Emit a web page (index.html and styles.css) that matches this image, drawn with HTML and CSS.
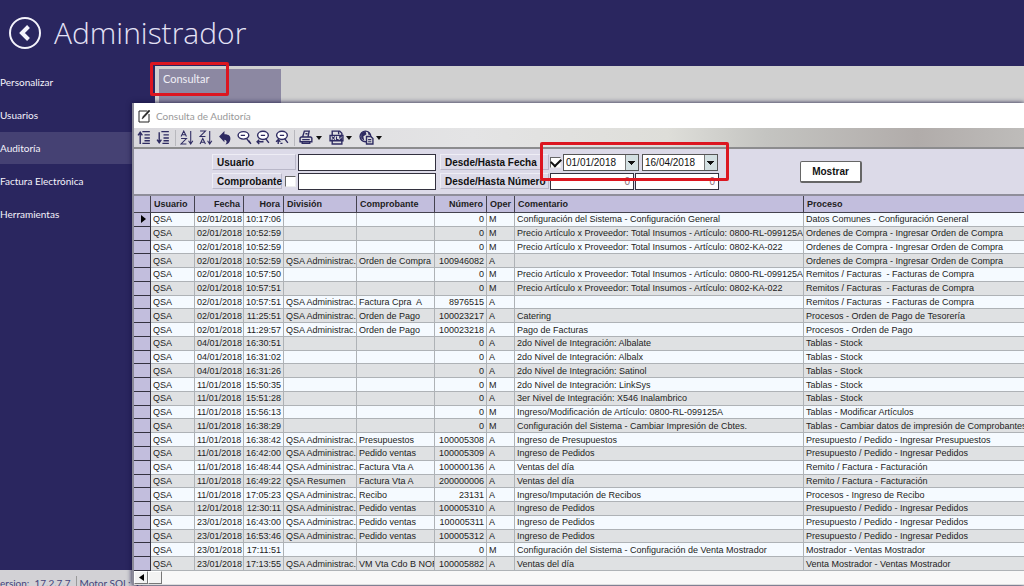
FILE: index.html
```html
<!DOCTYPE html>
<html lang="es">
<head>
<meta charset="utf-8">
<title>Administrador - Consulta de Auditoría</title>
<link rel="stylesheet" href="styles.css">
</head>
<body>
<div class="app">
  <header class="top">
    <button class="back" type="button" aria-label="Volver">
      <svg width="34" height="34" viewBox="0 0 34 34" fill="none" stroke="#f4f3fb"><circle cx="17" cy="17" r="15" stroke-width="2"/><path d="M20.500 10.500L14 17l6.500 6.500" stroke-width="4"/></svg>
    </button>
    <h1>Administrador</h1>
  </header>
  <div class="main">
    <nav class="side">
      <a href="#">Personalizar</a>
      <a href="#">Usuarios</a>
      <a href="#" class="active">Auditoría</a>
      <a href="#">Factura Electrónica</a>
      <a href="#">Herramientas</a>
    </nav>
    <div class="tiles"><button class="tile" type="button">Consultar</button></div>
  </div>
  <footer class="status"><span>ersion:&nbsp; 17.2.7.7</span><span class="motor">Motor SQL:&nbsp; C</span></footer>

  <section class="window">
    <div class="titlebar">
      <svg width="13" height="14" viewBox="0 0 13 14" fill="none" stroke="#222"><path d="M9.500 2H1v11h10V5"/><path d="M4 10l1-2.500L11 1l1 1-6 6.500z" fill="#222" stroke-width=".5"/></svg>
      <h2>Consulta de Auditoría</h2>
    </div>
    <div class="toolbar">
      <button type="button" aria-label="Expandir"><svg viewBox="0 0 14 14"><path d="M3 13V3M1 5l2-3 2 3M5 1.500h7M7 4.500h5M7 7.500h5M7 10h5M5 12.500h7"/></svg></button>
      <button type="button" aria-label="Contraer"><svg viewBox="0 0 14 14"><path d="M3 2v9M1 9l2 3 2-3M5 1.500h7M7 4.500h5M7 7.500h5M7 10h5M6 12.500h6"/></svg></button>
      <span class="sep"></span>
      <button type="button" aria-label="Orden ascendente"><svg viewBox="0 0 14 14"><path class="thin" d="M1 6l2.500-5L6 6M2 4.500h3M1 8h5l-5 5h5M10 1v11M8 10l2 3 2-3"/></svg></button>
      <button type="button" aria-label="Orden descendente"><svg viewBox="0 0 14 14"><path class="thin" d="M1 1h5L1 6h5M1 13l2.500-5L6 13M2 11.500h3M10 1v11M8 10l2 3 2-3"/></svg></button>
      <button type="button" aria-label="Deshacer"><svg viewBox="0 0 14 14"><path class="solid" d="M1 6l5-5v3c4.500 0 6 2 5.500 5-.5 2.500-2 4-4.500 4.500 1.500-2 1.500-4-1-4.500v2.500z"/></svg></button>
      <button type="button" aria-label="Buscar"><svg viewBox="0 0 14 14"><ellipse cx="6" cy="5" rx="5" ry="3.500" fill="#fff"/><path d="M3.500 5h4M9 8l3 4M11 10l2 3" /></svg></button>
      <button type="button" aria-label="Buscar siguiente"><svg viewBox="0 0 14 14"><ellipse cx="6.500" cy="5" rx="5" ry="3.800" fill="#fff"/><path d="M4.500 5h4M9 8l3 4M1 11h6M3 9l-2 2 2 2"/></svg></button>
      <button type="button" aria-label="Buscar anterior"><svg viewBox="0 0 14 14"><ellipse cx="6.500" cy="5" rx="5" ry="3.800" fill="#fff"/><path d="M4.500 5h4M9 8l3 4M3 8.500V13M1 11l2-2 2 2M5 12.500h2"/></svg></button>
      <span class="sep"></span>
      <button class="drop" type="button" aria-label="Imprimir"><svg viewBox="0 0 14 14"><path d="M3.500 6L5 1h4.500l-1 5M2 6.500h9l1 1v3.500H1V7.500zM3 11v1.500h7V11M3 9h7M6 3.500h2"/></svg></button>
      <button class="drop" type="button" aria-label="Exportar"><svg viewBox="0 0 14 14"><path d="M3 5V1h7l2 2v2M3 10v3h9v-3M1 5h12v5H1zM9 1v3"/><path class="thin" d="M2.500 6l3 3M5.500 6l-3 3M7 6v3h2M12 6h-2v1.500h2V9h-2"/></svg></button>
      <button class="drop" type="button" aria-label="Enviar"><svg viewBox="0 0 14 14"><circle cx="6" cy="6" r="5"/><path class="solid" d="M2 3l4-2 1 3-3 2 1 4-3-2zM8 1l3 3-2 1z"/><path d="M7 6h4l2 2v5H7z" fill="#ddd"/><path class="thin" d="M8.500 9h3M8.500 11h3"/></svg></button>
    </div>
    <form class="filters">
      <div class="rows">
        <div class="row">
          <label class="lab wide" for="usr">Usuario</label>
          <input class="field text" id="usr" type="text">
          <label class="lab range" for="d1">Desde/Hasta Fecha</label>
          <input class="check" type="checkbox" checked aria-label="Filtrar por fecha">
          <select class="date" id="d1"><option>01/01/2018</option></select>
          <select class="date" aria-label="Hasta fecha"><option>16/04/2018</option></select>
        </div>
        <div class="row">
          <label class="lab comp" for="cmp">Comprobante</label>
          <input class="check box" type="checkbox" aria-label="Filtrar por comprobante">
          <input class="field text" id="cmp" type="text">
          <label class="lab range" for="n1">Desde/Hasta Número</label>
          <input class="field num" id="n1" type="text" value="0">
          <input class="field num" type="text" value="0" aria-label="Hasta número">
        </div>
      </div>
      <button class="show" type="button">Mostrar</button>
    </form>
    <table class="grid">
      <colgroup><col class="c0"><col class="c1"><col class="c2"><col class="c3"><col class="c4"><col class="c5"><col class="c6"><col class="c7"><col class="c8"><col></colgroup>
      <thead><tr><th></th><th>Usuario</th><th>Fecha</th><th>Hora</th><th>División</th><th>Comprobante</th><th>Número</th><th>Oper</th><th>Comentario</th><th>Proceso</th></tr></thead>
      <tbody>
<tr><td><span class="cur"></span></td><td>QSA</td><td>02/01/2018</td><td>10:17:06</td><td></td><td></td><td>0</td><td>M</td><td>Configuración del Sistema - Configuración General</td><td>Datos Comunes - Configuración General</td></tr>
<tr><td></td><td>QSA</td><td>02/01/2018</td><td>10:52:59</td><td></td><td></td><td>0</td><td>M</td><td>Precio Artículo x Proveedor: Total Insumos - Artículo: 0800-RL-099125A</td><td>Ordenes de Compra - Ingresar Orden de Compra</td></tr>
<tr><td></td><td>QSA</td><td>02/01/2018</td><td>10:52:59</td><td></td><td></td><td>0</td><td>M</td><td>Precio Artículo x Proveedor: Total Insumos - Artículo: 0802-KA-022</td><td>Ordenes de Compra - Ingresar Orden de Compra</td></tr>
<tr><td></td><td>QSA</td><td>02/01/2018</td><td>10:52:59</td><td>QSA Administrac.</td><td>Orden de Compra</td><td>100946082</td><td>A</td><td></td><td>Ordenes de Compra - Ingresar Orden de Compra</td></tr>
<tr><td></td><td>QSA</td><td>02/01/2018</td><td>10:57:50</td><td></td><td></td><td>0</td><td>M</td><td>Precio Artículo x Proveedor: Total Insumos - Artículo: 0800-RL-099125A</td><td>Remitos / Facturas&nbsp; - Facturas de Compra</td></tr>
<tr><td></td><td>QSA</td><td>02/01/2018</td><td>10:57:51</td><td></td><td></td><td>0</td><td>M</td><td>Precio Artículo x Proveedor: Total Insumos - Artículo: 0802-KA-022</td><td>Remitos / Facturas&nbsp; - Facturas de Compra</td></tr>
<tr><td></td><td>QSA</td><td>02/01/2018</td><td>10:57:51</td><td>QSA Administrac.</td><td>Factura Cpra&nbsp; A</td><td>8976515</td><td>A</td><td></td><td>Remitos / Facturas&nbsp; - Facturas de Compra</td></tr>
<tr><td></td><td>QSA</td><td>02/01/2018</td><td>11:25:51</td><td>QSA Administrac.</td><td>Orden de Pago</td><td>100023217</td><td>A</td><td>Catering</td><td>Procesos - Orden de Pago de Tesorería</td></tr>
<tr><td></td><td>QSA</td><td>02/01/2018</td><td>11:29:57</td><td>QSA Administrac.</td><td>Orden de Pago</td><td>100023218</td><td>A</td><td>Pago de Facturas</td><td>Procesos - Orden de Pago</td></tr>
<tr><td></td><td>QSA</td><td>04/01/2018</td><td>16:30:51</td><td></td><td></td><td>0</td><td>A</td><td>2do Nivel de Integración: Albalate</td><td>Tablas - Stock</td></tr>
<tr><td></td><td>QSA</td><td>04/01/2018</td><td>16:31:02</td><td></td><td></td><td>0</td><td>A</td><td>2do Nivel de Integración: Albalx</td><td>Tablas - Stock</td></tr>
<tr><td></td><td>QSA</td><td>04/01/2018</td><td>16:31:26</td><td></td><td></td><td>0</td><td>A</td><td>2do Nivel de Integración: Satinol</td><td>Tablas - Stock</td></tr>
<tr><td></td><td>QSA</td><td>11/01/2018</td><td>15:50:35</td><td></td><td></td><td>0</td><td>M</td><td>2do Nivel de Integración: LinkSys</td><td>Tablas - Stock</td></tr>
<tr><td></td><td>QSA</td><td>11/01/2018</td><td>15:51:28</td><td></td><td></td><td>0</td><td>A</td><td>3er Nivel de Integración: X546 Inalambrico</td><td>Tablas - Stock</td></tr>
<tr><td></td><td>QSA</td><td>11/01/2018</td><td>15:56:13</td><td></td><td></td><td>0</td><td>M</td><td>Ingreso/Modificación de Artículo: 0800-RL-099125A</td><td>Tablas - Modificar Artículos</td></tr>
<tr><td></td><td>QSA</td><td>11/01/2018</td><td>16:38:29</td><td></td><td></td><td>0</td><td>M</td><td>Configuración del Sistema - Cambiar Impresión de Cbtes.</td><td>Tablas - Cambiar datos de impresión de Comprobantes</td></tr>
<tr><td></td><td>QSA</td><td>11/01/2018</td><td>16:38:42</td><td>QSA Administrac.</td><td>Presupuestos</td><td>100005308</td><td>A</td><td>Ingreso de Presupuestos</td><td>Presupuesto / Pedido - Ingresar Presupuestos</td></tr>
<tr><td></td><td>QSA</td><td>11/01/2018</td><td>16:42:00</td><td>QSA Administrac.</td><td>Pedido ventas</td><td>100005309</td><td>A</td><td>Ingreso de Pedidos</td><td>Presupuesto / Pedido - Ingresar Pedidos</td></tr>
<tr><td></td><td>QSA</td><td>11/01/2018</td><td>16:48:44</td><td>QSA Administrac.</td><td>Factura Vta A</td><td>100000136</td><td>A</td><td>Ventas del día</td><td>Remito / Factura - Facturación</td></tr>
<tr><td></td><td>QSA</td><td>11/01/2018</td><td>16:49:22</td><td>QSA Resumen</td><td>Factura Vta A</td><td>200000006</td><td>A</td><td>Ventas del día</td><td>Remito / Factura - Facturación</td></tr>
<tr><td></td><td>QSA</td><td>11/01/2018</td><td>17:05:23</td><td>QSA Administrac.</td><td>Recibo</td><td>23131</td><td>A</td><td>Ingreso/Imputación de Recibos</td><td>Procesos - Ingreso de Recibo</td></tr>
<tr><td></td><td>QSA</td><td>12/01/2018</td><td>12:30:11</td><td>QSA Administrac.</td><td>Pedido ventas</td><td>100005310</td><td>A</td><td>Ingreso de Pedidos</td><td>Presupuesto / Pedido - Ingresar Pedidos</td></tr>
<tr><td></td><td>QSA</td><td>23/01/2018</td><td>16:43:00</td><td>QSA Administrac.</td><td>Pedido ventas</td><td>100005311</td><td>A</td><td>Ingreso de Pedidos</td><td>Presupuesto / Pedido - Ingresar Pedidos</td></tr>
<tr><td></td><td>QSA</td><td>23/01/2018</td><td>16:53:46</td><td>QSA Administrac.</td><td>Pedido ventas</td><td>100005312</td><td>A</td><td>Ingreso de Pedidos</td><td>Presupuesto / Pedido - Ingresar Pedidos</td></tr>
<tr><td></td><td>QSA</td><td>23/01/2018</td><td>17:11:51</td><td></td><td></td><td>0</td><td>M</td><td>Configuración del Sistema - Configuración de Venta Mostrador</td><td>Mostrador - Ventas Mostrador</td></tr>
<tr><td></td><td>QSA</td><td>23/01/2018</td><td>17:13:55</td><td>QSA Administrac.</td><td>VM Vta Cdo B NOR</td><td>100005882</td><td>A</td><td>Ventas del día</td><td>Venta Mostrador - Ventas Mostrador</td></tr>
      </tbody>
    </table>
    <div class="scroll">
      <button type="button" aria-label="Desplazar a la izquierda"><svg width="5" height="7" viewBox="0 0 5 7"><path d="M5 0v7L0 3.500z"/></svg></button>
      <span class="thumb"></span>
    </div>
  </section>
  <div class="mark mark-tile"></div>
  <div class="mark mark-date"></div>
</div>
</body>
</html>
```
FILE: styles.css
```css
* { box-sizing: border-box; }
body { margin: 0; font-family: "Liberation Sans", Arial, sans-serif; background: #2a265f; }
button, input, select { font-family: inherit; margin: 0; }
.app { position: relative; display: flex; flex-direction: column; height: 100vh; overflow: hidden; }

.top { display: flex; align-items: center; gap: 12px; height: 66px; padding-left: 8px; flex: none; }
.back { display: flex; padding: 0; border: 0; background: none; }
.top h1 { margin: 0; color: #e4e2f6; font: 300 30px/44px "Open Sans", sans-serif; }

.main { display: flex; flex: 1; min-height: 0; }
.side { display: flex; flex-direction: column; width: 155px; flex: none; font: 10px/32px Lato, sans-serif; gap: 1px; }
.side a { color: #f4f3fb; text-decoration: none; }
.side .active { background: #454173; }
.tiles { flex: 1; padding: 3px 4px; background: #d0d0d0; }
.tile { width: 122px; height: 60px; padding: 3px 4px; border: 0; background: #8c88a2; color: #f0eff6; font: 11px/14px Lato, sans-serif; text-align: left; display: flex; }
.status { display: flex; gap: 5px; height: 16px; padding-top: 6px; flex: none; overflow: hidden; background: #d2d1d5; color: #45437a; font: 10px/14px Lato, sans-serif; white-space: pre; }
.motor { border-left: 1px solid #999; padding-left: 3px; }

.window { position: absolute; left: 132px; right: 0; top: 103px; border-left: 2px solid #8b8a98; background: #fff; box-shadow: 0 0 5px #14113c; }
.titlebar { display: flex; align-items: center; gap: 5px; height: 25px; padding-left: 4px; }
.titlebar h2 { margin: 0; color: #999; font: 400 10px/14px Lato, sans-serif; }
.toolbar { display: flex; align-items: center; gap: 4px; height: 21px; padding-left: 3px; border-bottom: 2px solid #8c8c8e; background: linear-gradient(90deg, #d9d8dd 0, #e4e4e5 38%, #deded9 60%, #c4c4c1 71%, #b1acaa 88%, #bebcba 100%); }
.toolbar button { display: flex; align-items: center; padding: 0; border: 0; background: none; }
.toolbar svg { width: 15px; height: 15px; fill: none; stroke: #2e2b62; stroke-width: 1.300; }
.toolbar .thin { stroke-width: 1; }
.toolbar .solid { fill: #2e2b62; stroke: none; }
.toolbar .drop::after { content: ""; margin: 0 3px 0 2px; border: 3px solid transparent; border-top: 4px solid #111; border-bottom: 0; }
.sep { width: 1px; height: 16px; background: #b8b8bd; }

.filters { display: flex; align-items: center; height: 47px; padding-left: 78px; background: #dcdae8; border-bottom: 2px solid #8f8e9a; }
.rows { display: flex; flex-direction: column; gap: 2px; }
.row { display: flex; align-items: center; height: 17px; }
.lab { height: 16px; padding-left: 4px; border: 1px solid; border-color: #eeedf5 #b9b7c8 #b9b7c8 #eeedf5; color: #111; font: bold 10px/15px "Liberation Sans", Arial, sans-serif; white-space: nowrap; }
.wide { width: 84px; margin-right: 2px; }
.comp { width: 70px; margin-right: 2px; }
.range { width: 109px; margin: 0 1px 0 4px; }
.field { height: 17px; border: 1px solid #33313f; background: #fff; font-size: 10px; padding: 0 3px; }
.text { width: 138px; }
.num { width: 84px; margin-right: 1px; text-align: right; color: #8a7078; }
.check { appearance: none; width: 11px; height: 11px; margin-right: 2px; border: 1px solid; border-color: #666 #eee #eee #666; background: #fff; display: grid; place-items: center; }
.check:checked::after { content: ""; width: 8px; height: 5px; margin-bottom: 3px; border: 2px solid #111; border-width: 0 0 2px 2px; rotate: -45deg; }
.box { margin-left: 1px; }
.date { appearance: none; width: 76px; height: 17px; margin-right: 3px; padding: 0 2px; border: 1px solid #555; border-radius: 0; color: #111; font-size: 10px; background: linear-gradient(#111, #111) right 3px top 6px / 7px 1px no-repeat, linear-gradient(#111, #111) right 4px top 7px / 5px 1px no-repeat, linear-gradient(#111, #111) right 5px top 8px / 3px 1px no-repeat, linear-gradient(#111, #111) right 6px top 9px / 1px 1px no-repeat, linear-gradient(#d3e0e2, #d3e0e2) right / 12px no-repeat, linear-gradient(#777, #777) right 12px top / 1px no-repeat, #fff; }
.show { width: 62px; height: 22px; margin-left: 79px; border: 1px solid #666; border-right-width: 2px; border-bottom-width: 2px; border-radius: 2px; background: #fff; color: #111; font-size: 10px; font-weight: bold; }

.grid { width: 100%; height: 375px; table-layout: fixed; border-collapse: separate; border-spacing: 0; color: #1d1c22; font-size: 9px; line-height: 12px; }
.c0 { width: 17px; } .c1 { width: 44px; } .c2 { width: 49px; } .c3 { width: 40px; } .c4 { width: 73px; }
.c5 { width: 78px; } .c6 { width: 52px; } .c7 { width: 28px; } .c8 { width: 289px; }
.grid th, .grid td { overflow: hidden; white-space: nowrap; text-align: left; border-right: 1px solid #aeb2b6; border-bottom: 1px solid #aeb2b6; }
.grid th { height: 17px; padding: 0 3px; background: #c2bedd; border-color: #44424e; }
.grid td { padding: 0 0 0 2px; background: #f5faff; }
.grid tbody tr:nth-child(even) td { background: #dfe1e3; }
.grid tbody tr td:first-child { background: #c2bedd; border-color: #33313f; }
.grid tr > :last-child { border-right: 0; }
.grid th:nth-child(3), .grid th:nth-child(4), .grid th:nth-child(7) { text-align: right; }
.grid td:nth-child(3), .grid td:nth-child(4), .grid td:nth-child(7) { padding-right: 2px; text-align: right; }
.cur { display: block; width: 0; margin-left: 5px; border: 4px solid transparent; border-left: 5px solid #000; border-right: 0; }
.scroll { display: flex; height: 14px; background: #f8f8f8; border-bottom: 1px solid #ddd; }
.scroll button, .thumb { display: grid; place-items: center; width: 14px; height: 13px; padding: 0; border: 1px solid; border-color: #fff #777 #777 #fff; background: #f3f3f3; }

.mark { position: absolute; border: 3px solid #dc1620; border-radius: 2px; pointer-events: none; }
.mark-tile { left: 150px; top: 62px; width: 79px; height: 34px; }
.mark-date { left: 540px; top: 142px; width: 189px; height: 39px; }
```
